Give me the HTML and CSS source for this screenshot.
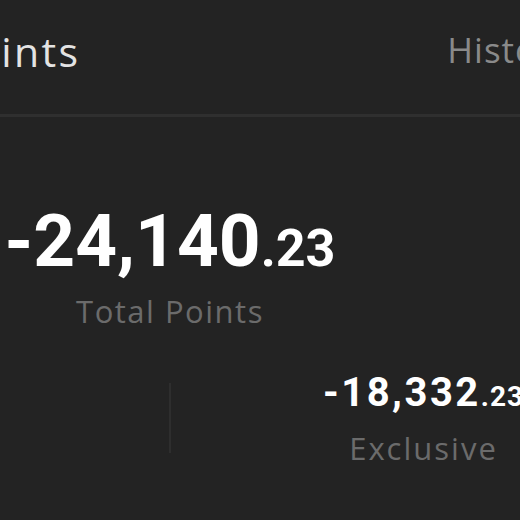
FILE: index.html
```html
<!DOCTYPE html>
<html lang="en">

<head>
    <meta charset="UTF-8">
    <meta name="viewport" content="width=device-width, initial-scale=1.0">
    <title>Points</title>
    <link rel="stylesheet" href="styles.css">
</head>

<body>
    <div class="page">
        <header class="header">
            <h1 class="title">Points</h1>
            <a class="history-link" href="#">History</a>
        </header>

        <section class="total">
            <div class="amount amount-large">-24,140<span class="decimals">.23</span></div>
            <div class="label">Total Points</div>
        </section>

        <section class="breakdown">
            <div class="breakdown-item">
                <div class="amount amount-small">-5,808</div>
                <div class="label">Regular</div>
            </div>
            <div class="divider"></div>
            <div class="breakdown-item">
                <div class="amount amount-small">-18,332<span class="decimals">.23</span></div>
                <div class="label">Exclusive</div>
            </div>
        </section>
    </div>
</body>

</html>
```

FILE: styles.css
```css
body {
    margin: 0;
    font-family: "Open Sans", "Noto Sans", sans-serif;
    background-color: #232323;
    color: white;
    height: 100vh;
    overflow: hidden;
}

.page {
    width: 1012px;
    margin-left: -336px;
}

.header {
    display: flex;
    justify-content: space-between;
    align-items: center;
    height: 117px;
    padding: 0 105px 16px 283px;
    border-bottom: 3px solid #2f2f2f;
    box-sizing: border-box;
}

.title {
    margin: 4px 0 0;
    font-size: 41px;
    font-weight: 400;
    letter-spacing: 2.4px;
    color: #e3e3e3;
}

.history-link {
    font-size: 35px;
    letter-spacing: 1px;
    color: #8a8a8a;
    text-decoration: none;
}

.total {
    text-align: center;
    padding-top: 88px;
}

.amount {
    font-family: Roboto, "Open Sans", sans-serif;
    font-weight: 700;
    line-height: 1;
    color: #ffffff;
}

.amount-large {
    font-size: 73px;
}

.amount-large .decimals {
    font-size: 52px;
}

.amount-small {
    font-size: 40px;
    letter-spacing: 2.5px;
}

.amount-small .decimals {
    font-size: 28px;
    letter-spacing: 1px;
}

.label {
    font-size: 31px;
    letter-spacing: 1.5px;
    line-height: 1.3;
    color: #6b6b6b;
    margin-top: 13px;
}

.breakdown {
    display: grid;
    grid-template-columns: 1fr 2px 1fr;
    align-items: center;
    margin-top: 42px;
}

.breakdown-item {
    text-align: center;
}

.breakdown-item .label {
    margin-top: 15px;
    letter-spacing: 2px;
}

.divider {
    height: 70px;
    margin-bottom: 6px;
    background-color: #2e2e2e;
}
```
